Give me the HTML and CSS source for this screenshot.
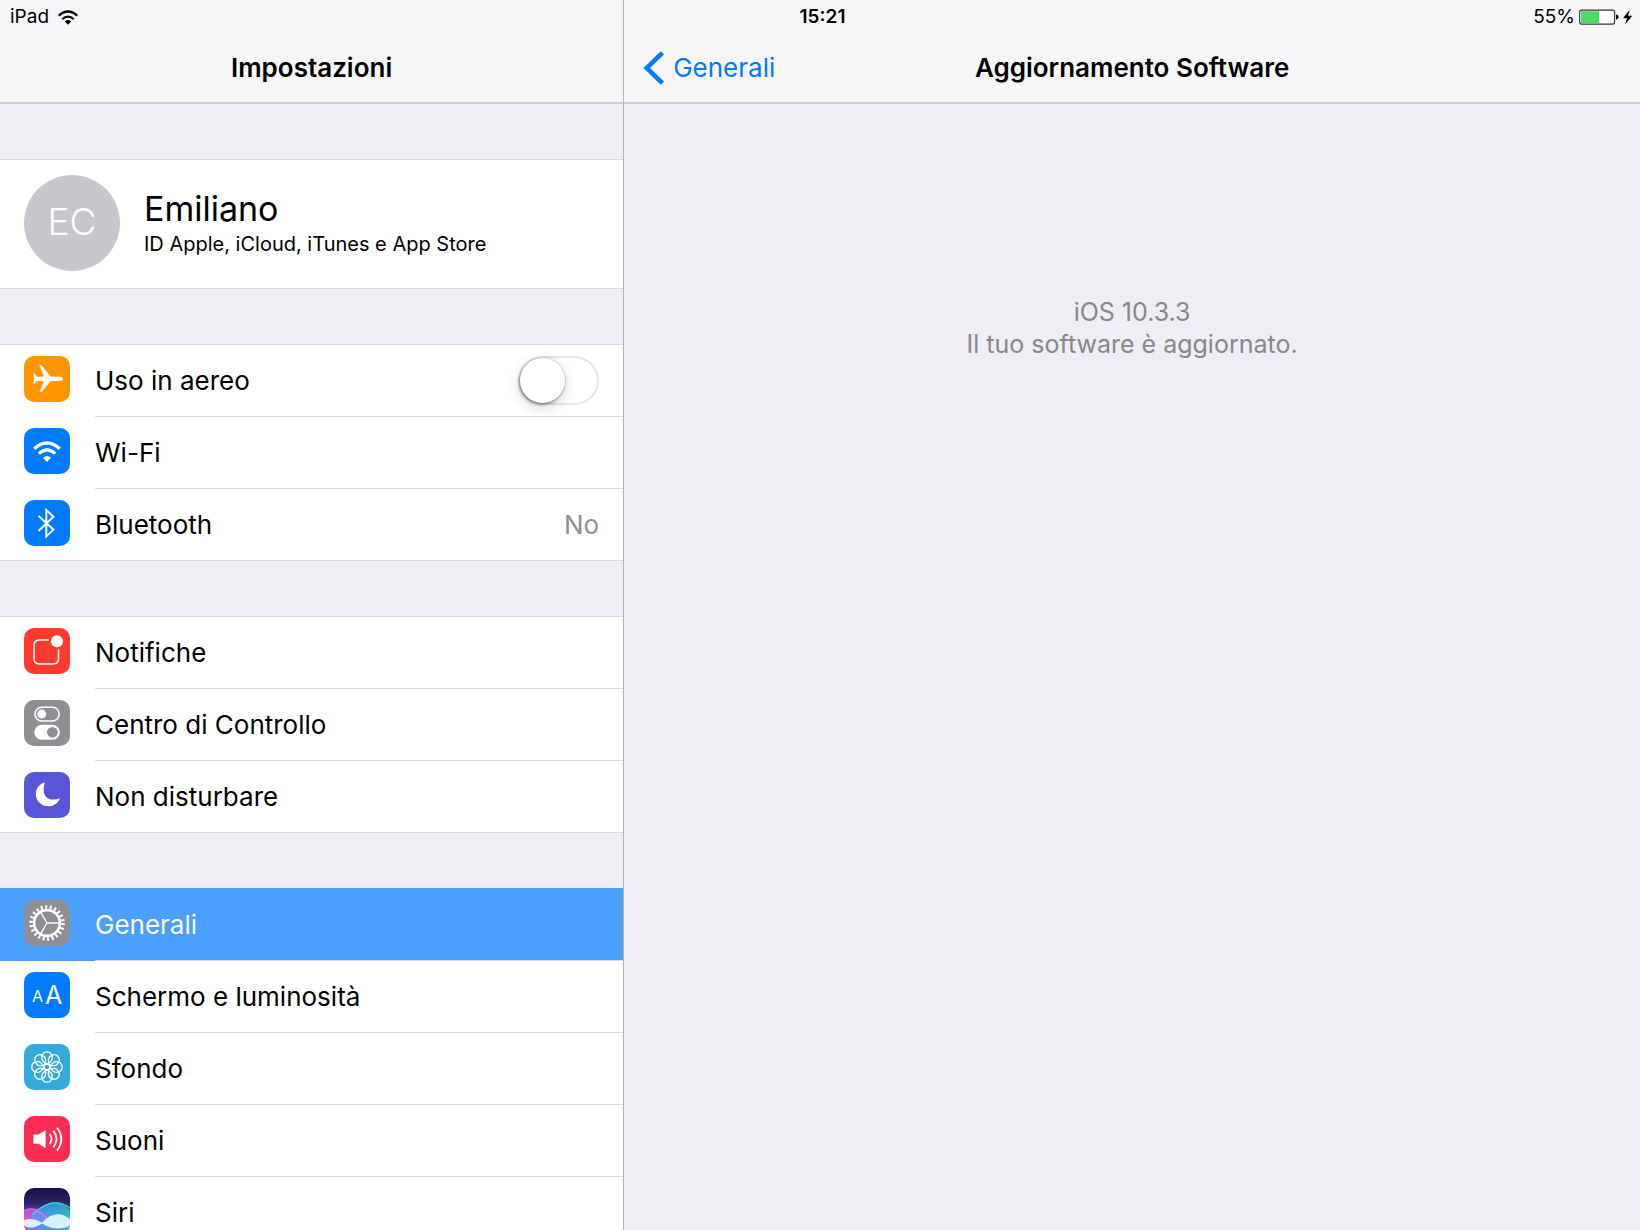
FILE: index.html
```html
<!DOCTYPE html>
<html lang="it">
<head>
<meta charset="utf-8">
<meta name="viewport" content="width=device-width, initial-scale=1">
<title>Impostazioni</title>
<link rel="stylesheet" href="styles.css">
</head>
<body>
<div class="screen">
  <aside class="sidebar">
    <header class="navbar"><h1 class="title">Impostazioni</h1></header>
    <nav class="groups">
      <div class="group">
        <a class="profile" href="#profilo">
          <span class="avatar">EC</span>
          <span class="profile-text">
            <span class="name">Emiliano</span>
            <span class="services">ID Apple, iCloud, iTunes e App Store</span>
          </span>
        </a>
      </div>

      <div class="group">
        <div class="row">
          <svg class="icon orange" viewBox="0 0 46 46" aria-hidden="true"><path fill="#fff" d="M36 20.8C38 21 39 21.8 39 22.8S38 24.6 36 24.8L26.5 25.2 18.2 35.4Q17.8 36 17 36H15.4L20 25.2 13 24.9 10.4 28H9.3L10 22.8 9.3 17.3H10.4L13 20.7 20 20.4 15.2 9.2H16.8Q17.6 9.2 18 9.8L26.5 20.4Z"/></svg>
          <div class="cell">
            <label class="label" for="aereo">Uso in aereo</label>
            <input class="switch" type="checkbox" role="switch" id="aereo">
          </div>
        </div>
        <a class="row" href="#wifi">
          <svg class="icon blue" viewBox="0 0 46 46" aria-hidden="true"><g fill="none" stroke="#fff" stroke-width="3.2"><path d="M10.2 20.6Q23 9.4 35.8 20.6"/><path d="M14.8 25.6Q23 18.4 31.2 25.6"/></g><path fill="#fff" d="M19 29.8Q23 26.4 27 29.8L23 34Z"/></svg>
          <span class="cell"><span class="label">Wi-Fi</span></span>
        </a>
        <a class="row" href="#bluetooth">
          <svg class="icon blue" viewBox="0 0 46 46" aria-hidden="true"><path fill="none" stroke="#fff" stroke-width="2" d="M14.4 15.8 29.4 29.6 22.3 36.4V10L29.4 16.8 14.4 31"/></svg>
          <span class="cell"><span class="label">Bluetooth</span><span class="value">No</span></span>
        </a>
      </div>

      <div class="group">
        <a class="row" href="#notifiche">
          <svg class="icon red" viewBox="0 0 46 46" aria-hidden="true"><path fill="none" stroke="#fff" stroke-width="1.5" d="M24.8 12H15.5Q10 12 10 17.5V30.5Q10 36 15.5 36H29Q34.5 36 34.5 30.5V21.6"/><circle cx="33" cy="13.3" r="6" fill="#fff"/></svg>
          <span class="cell"><span class="label">Notifiche</span></span>
        </a>
        <a class="row" href="#centro">
          <svg class="icon gray" viewBox="0 0 46 46" aria-hidden="true"><rect x="11" y="7.3" width="24.2" height="13.6" rx="6.8" fill="none" stroke="#fff" stroke-width="1.5"/><circle cx="17.8" cy="14.1" r="4.5" fill="#fff"/><rect x="10.3" y="24.8" width="25.6" height="15" rx="7.5" fill="#fff"/><circle cx="28.4" cy="32.3" r="5.4" fill="#8e8e93"/></svg>
          <span class="cell"><span class="label">Centro di Controllo</span></span>
        </a>
        <a class="row" href="#disturbare">
          <svg class="icon purple" viewBox="0 0 46 46" aria-hidden="true"><path fill="#fff" d="M20.8 10.2C16 28 28 29.5 36 26.2C34 31 29.8 34.3 24.6 34.3C17.5 34.3 11.8 29 11.8 22.2C11.8 16.2 15.4 11.8 20.8 10.2Z"/></svg>
          <span class="cell"><span class="label">Non disturbare</span></span>
        </a>
      </div>

      <div class="group">
        <a class="row selected" href="#generali" aria-current="page">
          <svg class="icon gray" viewBox="0 0 46 46" aria-hidden="true"><g fill="none" stroke="#fff"><circle cx="23" cy="23" r="15.8" stroke-width="4" stroke-dasharray="2 2.5127"/><circle cx="23" cy="23" r="12.9" stroke-width="2.6"/><path stroke-width="1.4" d="M23 23H36M23 23 16.5 11.8M23 23 16.5 34.2"/></g></svg>
          <span class="cell"><span class="label">Generali</span></span>
        </a>
        <a class="row" href="#schermo">
          <svg class="icon blue" viewBox="0 0 46 46" aria-hidden="true"><text class="glyph" x="8" y="30" font-size="16">A</text><text class="glyph" x="21" y="32" font-size="25">A</text></svg>
          <span class="cell"><span class="label">Schermo e luminosità</span></span>
        </a>
        <a class="row" href="#sfondo">
          <svg class="icon cyan" viewBox="0 0 46 46" aria-hidden="true">
            <defs><path id="petal" d="M23 20C19 18 16.4 15.5 18.2 11.4A5 5 0 0 1 27.8 11.4C29.6 15.5 27 18 23 20Z"/></defs>
            <g fill="none" stroke="#fff" stroke-width="1.3"><use href="#petal"/><use href="#petal" transform="rotate(45 23 23)"/><use href="#petal" transform="rotate(90 23 23)"/><use href="#petal" transform="rotate(135 23 23)"/><use href="#petal" transform="rotate(180 23 23)"/><use href="#petal" transform="rotate(225 23 23)"/><use href="#petal" transform="rotate(270 23 23)"/><use href="#petal" transform="rotate(315 23 23)"/><circle cx="23" cy="23" r="3"/></g></svg>
          <span class="cell"><span class="label">Sfondo</span></span>
        </a>
        <a class="row" href="#suoni">
          <svg class="icon pink" viewBox="0 0 46 46" aria-hidden="true"><path fill="#fff" d="M9.3 18.4H14.6L21.6 14V32.2L14.6 27.8H9.3Z"/><g fill="none" stroke="#fff" stroke-width="1.8"><path d="M25.6 18Q29.4 23 25.6 28"/><path d="M29.4 14.6Q35.6 23 29.4 31.4"/><path d="M33 11.6Q41.6 23 33 34.6"/></g></svg>
          <span class="cell"><span class="label">Suoni</span></span>
        </a>
        <a class="row" href="#siri">
          <svg class="icon" viewBox="0 0 46 46" aria-hidden="true">
            <defs>
              <linearGradient id="sky" x1="0" y1="0" x2="0" y2="1"><stop offset="0" stop-color="#1c0f45"/><stop offset=".35" stop-color="#30246e"/><stop offset=".7" stop-color="#5d8ff0"/><stop offset="1" stop-color="#20215e"/></linearGradient>
              <linearGradient id="waveA" x1="0" y1="0" x2="1" y2="0"><stop offset="0" stop-color="#ff4fd8"/><stop offset="1" stop-color="#7a5cff"/></linearGradient>
              <linearGradient id="waveB" x1="0" y1="0" x2="1" y2="0"><stop offset="0" stop-color="#6a8dff"/><stop offset=".6" stop-color="#2fb6ea"/><stop offset="1" stop-color="#2fd0c4"/></linearGradient>
            </defs>
            <rect width="46" height="46" fill="url(#sky)"/>
            <path d="M0 23Q12 16 26 32L46 38V42H0Z" fill="url(#waveA)" opacity=".7"/>
            <path d="M4 34Q26 2 46 22V42H4Z" fill="url(#waveB)" opacity=".75"/>
            <path d="M0 23Q12 16 24 32" fill="none" stroke="#ff62e0" stroke-width="1.2"/>
            <path d="M8 27Q28 7 46 20" fill="none" stroke="#35dfe2" stroke-width="1.2"/>
            <path d="M0 32Q9 29 18 34.5Q32 20 46 31V38Q32 44 18 35.5Q9 42 0 38Z" fill="#e6fbff" opacity=".9"/>
          </svg>
          <span class="cell"><span class="label">Siri</span></span>
        </a>
      </div>
    </nav>
  </aside>

  <main class="detail">
    <header class="navbar split">
      <a class="back" href="#generali"><svg class="chevron" viewBox="0 0 22 34" aria-hidden="true"><path fill="none" stroke="currentColor" stroke-width="4.6" d="M19.4 1.8 3.6 17 19.4 32.2"/></svg>Generali</a>
      <h2 class="title">Aggiornamento Software</h2>
    </header>
    <p class="message">iOS 10.3.3<br>Il tuo software è aggiornato.</p>
  </main>

  <div class="status">
    <span class="device">iPad <svg class="signal" viewBox="0 0 20 15" aria-label="Wi-Fi"><g fill="none" stroke="#000" stroke-width="2.2"><path d="M.8 5.6Q10-2.6 19.2 5.6"/><path d="M4.2 9.2Q10 4 15.8 9.2"/></g><path d="M6.9 11.4Q10 8.8 13.1 11.4L10 14.8Z"/></svg></span>
    <time class="clock">15:21</time>
    <span class="power">55% <svg class="battery" viewBox="0 0 54 16" aria-label="In carica"><rect x=".6" y="1.1" width="35" height="14" rx="2" fill="#fff" stroke="#333" stroke-width="1.1"/><rect x="1.8" y="2.2" width="18.2" height="11.8" fill="#4cd964"/><path d="M37 5.4Q39.6 5.8 39.6 8.1T37 10.8Z"/><path d="M50.6.8 44 9.2H48L46 15.6 53.4 6.8H49.2Z"/></svg></span>
  </div>
</div>
</body>
</html>
```
FILE: styles.css
```css
* { box-sizing: border-box; }

body {
  margin: 0;
  background: #efeef4;
  color: #000;
  font-family: Inter, "Liberation Sans", sans-serif;
  font-size: 26px;
}

a { color: inherit; text-decoration: none; }

.screen {
  display: grid;
  grid-template-columns: 38fr 62fr;
  grid-template-rows: 34px 1fr;
  height: 100vh;
  overflow: hidden;
}

.sidebar, .detail { grid-row: 1 / 3; min-width: 0; min-height: 0; overflow: hidden; }
.sidebar { grid-column: 1; }
.detail { grid-column: 2; border-left: 1px solid #b2b1b7; }

/* status bar, shared by both panes */
.status {
  grid-column: 1 / 3;
  grid-row: 1;
  display: grid;
  grid-template-columns: 1fr auto 1fr;
  align-items: center;
  padding: 0 7px 0 10px;
  font-size: 19px;
  line-height: 34px;
}
.device, .power { display: flex; align-items: center; }
.device { gap: 9px; }
.power { justify-content: flex-end; gap: 4px; }
.clock { padding-left: 2px; font-weight: 600; }
.signal { width: 20px; height: 15px; }
.battery { width: 54px; height: 16px; }

.navbar {
  display: grid;
  align-items: center;
  justify-items: center;
  height: 104px;
  padding-top: 34px;
  background: #f6f6f8;
  border-bottom: 2px solid #cfced2;
}
.navbar.split { grid-template-columns: 1fr auto 1fr; padding-left: 19px; padding-right: 19px; }
.title { margin: 0; font-size: 26px; font-weight: 600; line-height: 32px; }
.back { display: flex; align-items: center; gap: 8px; justify-self: start; color: #007aff; line-height: 32px; }
.chevron { width: 22px; height: 34px; }

.groups { display: flex; flex-direction: column; gap: 55px; padding-top: 55px; }
.group { background: #fff; border-top: 1px solid #d8d7dc; }

.profile {
  display: flex;
  align-items: flex-start;
  gap: 24px;
  padding: 15px 24px 17px;
  border-bottom: 1px solid #d8d7dc;
}
.avatar {
  width: 96px;
  height: 96px;
  flex: none;
  border-radius: 50%;
  background: #c7c6cc;
  color: #fff;
  font-size: 37px;
  font-weight: 300;
  line-height: 94px;
  text-align: center;
}
.profile-text { display: flex; flex-direction: column; padding-top: 13px; }
.name { font-size: 34px; line-height: 42px; }
.services { font-size: 20px; line-height: 28px; }

.row { display: flex; height: 72px; padding-left: 24px; }
.icon { flex: none; width: 46px; height: 46px; margin-top: 11px; border-radius: 10px; }
.cell {
  display: flex;
  flex: 1;
  align-items: center;
  justify-content: space-between;
  margin-left: 25px;
  padding-right: 24px;
  border-bottom: 1px solid #d8d7dc;
}
.row:last-child { border-bottom: 1px solid #d8d7dc; }
.row:last-child .cell { border-bottom: 0; }
.label { line-height: 32px; }
.value { color: #8e8e93; line-height: 32px; }
.selected { background: #4ba0ff; color: #fff; box-shadow: 0 -1px #4ba0ff; }

.orange { background: #ff9500; }
.blue { background: #007aff; }
.red { background: #ff3b30; }
.gray { background: #8e8e93; }
.purple { background: #5856d6; }
.cyan { background: #34aadc; }
.pink { background: #ff2d55; }
.glyph { fill: #fff; }

.switch {
  appearance: none;
  width: 81px;
  height: 49px;
  margin: 0;
  border: 2px solid #e5e5e5;
  border-radius: 25px;
  background: #fff;
}
.switch::before {
  content: "";
  display: block;
  width: 45px;
  height: 45px;
  border-radius: 50%;
  background: #fff;
  box-shadow: 0 0 1px 1px rgb(0 0 0 / 10%), -1px 2px 3px rgb(0 0 0 / 30%), 0 4px 14px rgb(0 0 0 / 18%);
}
.switch:checked { border-color: #4cd964; background: #4cd964; }
.switch:checked::before { margin-left: 32px; }

.message {
  margin: 0;
  padding: 192px 24px 0;
  color: #88878c;
  font-size: 25px;
  line-height: 32px;
  text-align: center;
}
```
